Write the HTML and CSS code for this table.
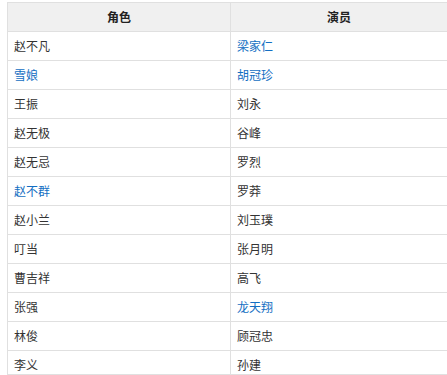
FILE: index.html
```html
<!DOCTYPE html>
<html lang="zh">
<head>
<meta charset="utf-8">
<link rel="stylesheet" href="styles.css">
</head>
<body>
<div class="frame">
<table class="cast">
  <colgroup><col class="c1"><col class="c2"></colgroup>
  <thead>
    <tr><th>角色</th><th>演员</th></tr>
  </thead>
  <tbody>
    <tr><td>赵不凡</td><td><a class="lk">梁家仁</a></td></tr>
    <tr><td><a class="lk">雪娘</a></td><td><a class="lk">胡冠珍</a></td></tr>
    <tr><td>王振</td><td>刘永</td></tr>
    <tr><td>赵无极</td><td>谷峰</td></tr>
    <tr><td>赵无忌</td><td>罗烈</td></tr>
    <tr><td><a class="lk">赵不群</a></td><td>罗莽</td></tr>
    <tr><td>赵小兰</td><td>刘玉璞</td></tr>
    <tr><td>叮当</td><td>张月明</td></tr>
    <tr><td>曹吉祥</td><td>高飞</td></tr>
    <tr><td>张强</td><td><a class="lk">龙天翔</a></td></tr>
    <tr><td>林俊</td><td>顾冠忠</td></tr>
    <tr><td>李义</td><td>孙建</td></tr>
  </tbody>
</table>
</div>
</body>
</html>
```
FILE: styles.css
```css
html, body {
  margin: 0;
  padding: 0;
  background: #fff;
}
body {
  padding: 2px 0 0 7px;
  font-family: "Noto Sans CJK SC", "Microsoft YaHei", sans-serif;
  font-size: 12px;
  color: #333;
}
.frame {
  width: 440px;
  height: 373px;
  overflow: hidden;
  border-bottom: 1px solid #e0e0e0;
  box-sizing: border-box;
}
.cast {
  width: 440px;
  border-collapse: collapse;
  table-layout: fixed;
}
.c1 { width: 223px; }
.c2 { width: 217px; }
.cast tr {
  height: 29px;
}
.cast th, .cast td {
  border: 1px solid #e0e0e0;
  padding: 0 6px;
  line-height: 16px;
}
.cast th {
  background: #f0f0f0;
  font-weight: bold;
  text-align: center;
  color: #222;
}
.cast td {
  text-align: left;
}
.lk {
  color: #136ec2;
  text-decoration: none;
}
```
